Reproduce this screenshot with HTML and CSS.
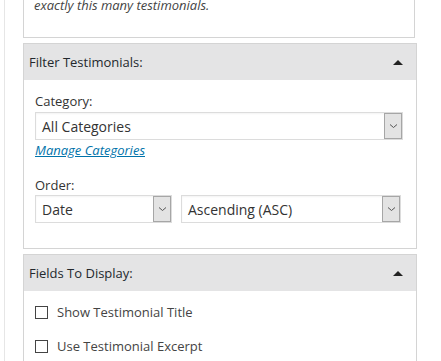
FILE: index.html
```html
<!DOCTYPE html>
<html>
<head>
<meta charset="utf-8">
<link rel="stylesheet" href="styles.css">
</head>
<body>
<div class="outer">
  <div class="box intro">
    <p class="note">exactly this many testimonials.</p>
  </div>
  <div class="box">
    <div class="head"><span>Filter Testimonials:</span><span class="tri"></span></div>
    <div class="body filter">
      <label class="lbl">Category:</label>
      <div class="sel wide"><span class="val">All Categories</span><span class="btn"><svg width="9" height="6" viewBox="0 0 9 6"><path d="M1 1.5 L4.5 4.5 L8 1.5" fill="none" stroke="#555" stroke-width="1"/></svg></span></div>
      <a class="link" href="#">Manage Categories</a>
      <label class="lbl order">Order:</label>
      <div class="row">
        <div class="sel date"><span class="val">Date</span><span class="btn"><svg width="9" height="6" viewBox="0 0 9 6"><path d="M1 1.5 L4.5 4.5 L8 1.5" fill="none" stroke="#555" stroke-width="1"/></svg></span></div>
        <div class="sel dir"><span class="val">Ascending (ASC)</span><span class="btn"><svg width="9" height="6" viewBox="0 0 9 6"><path d="M1 1.5 L4.5 4.5 L8 1.5" fill="none" stroke="#555" stroke-width="1"/></svg></span></div>
      </div>
    </div>
  </div>
  <div class="box last">
    <div class="head"><span>Fields To Display:</span><span class="tri"></span></div>
    <div class="body fields">
      <div class="check"><span class="cb"></span><span>Show Testimonial Title</span></div>
      <div class="check"><span class="cb"></span><span>Use Testimonial Excerpt</span></div>
    </div>
  </div>
</div>
</body>
</html>
```

FILE: styles.css
```css
html, body {
  margin: 0;
  padding: 0;
  height: 100%;
  background: #fff;
  overflow: hidden;
}
body {
  font-family: "Open Sans", "Noto Sans", sans-serif;
  color: #333;
}
.outer {
  margin-left: 4px;
  width: 429px;
  height: 100%;
  border-left: 1px solid #e6e6e6;
  border-right: 1px solid #e6e6e6;
  padding-left: 18px;
  box-sizing: content-box;
}
.box {
  width: 392px;
  border: 1px solid #d4d4d4;
  background: #fff;
  margin-bottom: 5px;
}
.intro {
  border-top: none;
  height: 38px;
  box-sizing: border-box;
}
.note {
  margin: 0;
  padding-left: 10px;
  font-style: italic;
  font-size: 13px;
  line-height: 16px;
  color: #444;
  position: relative;
  top: -3px;
}
.head {
  background: #e4e4e5;
  height: 36px;
  display: flex;
  align-items: center;
  justify-content: space-between;
  padding: 0 13px 0 5px;
  font-size: 13px;
  color: #23282d;
}
.tri {
  width: 0;
  height: 0;
  border-left: 5px solid transparent;
  border-right: 5px solid transparent;
  border-bottom: 5px solid #222;
}
.body {
  padding: 0 14px 0 11px;
}
.filter {
  padding-top: 12px;
  height: 168px;
  box-sizing: border-box;
}
.lbl {
  display: block;
  font-size: 13px;
  line-height: 18px;
  color: #333;
  margin-bottom: 2px;
}
.sel {
  display: flex;
  align-items: stretch;
  border: 1px solid #dcdcdc;
  height: 28px;
  box-sizing: border-box;
  background: #fff;
  box-shadow: inset 0 1px 2px rgba(0,0,0,0.05);
}
.sel .val {
  flex: 1;
  display: flex;
  align-items: center;
  padding-left: 6px;
  font-size: 14px;
  color: #333;
  white-space: nowrap;
  overflow: hidden;
}
.sel .btn {
  width: 16px;
  background: #e3e3e3;
  border: 1px solid #a6a6a6;
  display: flex;
  align-items: center;
  justify-content: center;
  margin: 0;
}
.wide { width: 368px; }
.link {
  display: block;
  font-size: 13px;
  font-style: italic;
  color: #0073aa;
  text-decoration: underline;
  line-height: 18px;
  margin-top: 1px;
}
.lbl.order { margin-top: 17px; margin-bottom: 1px; }
.row {
  display: flex;
  gap: 9px;
}
.date { width: 137px; }
.dir { width: 220px; }
.fields {
  padding-top: 11px;
}
.check {
  display: flex;
  align-items: center;
  gap: 9px;
  font-size: 13px;
  color: #444;
  height: 20px;
  margin-bottom: 14px;
}
.cb {
  border: 1px solid #444;
  box-sizing: border-box;
  width: 13px;
  height: 13px;
  background: #fff;
}
.last { margin-bottom: 0; }
```
